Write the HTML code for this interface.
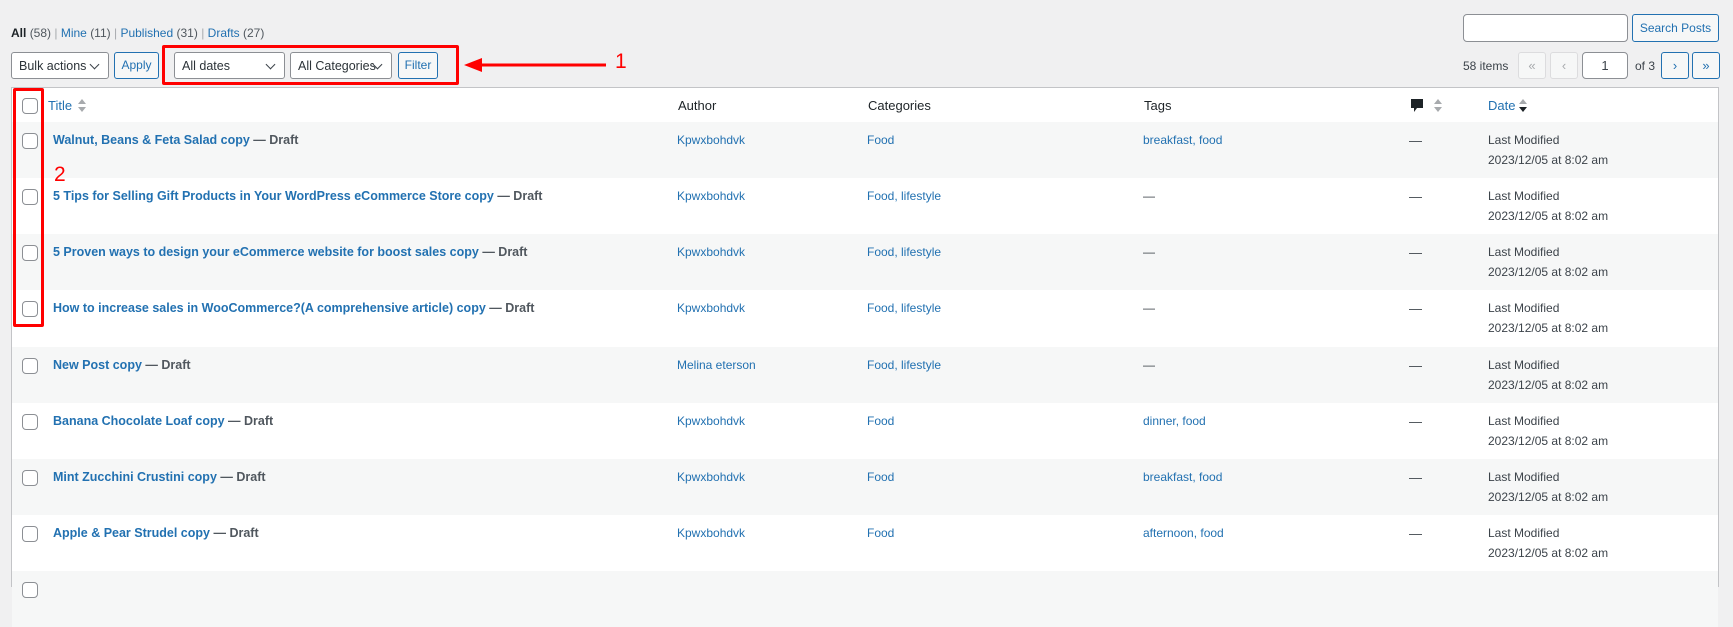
<!DOCTYPE html>
<html><head><meta charset="utf-8"><style>
*{box-sizing:border-box;margin:0;padding:0}
body{width:1733px;height:583px;background:#f0f0f1;font-family:"Liberation Sans",sans-serif;font-size:13px;color:#3c434a;position:relative;overflow:hidden}
.a{position:absolute;white-space:nowrap}
a,.l{color:#2271b1;text-decoration:none}
.sel{position:absolute;background:#fff;border:1px solid #8c8f94;border-radius:3px;height:27px;font-size:12.5px;color:#2c3338;padding:6px 7px;white-space:nowrap;overflow:hidden}
.sel:after{content:"";position:absolute;right:10px;top:8px;width:6px;height:6px;border-right:1.5px solid #3c434a;border-bottom:1.5px solid #3c434a;transform:rotate(45deg);background:#fff}
.btn{position:absolute;border:1px solid #2271b1;color:#2271b1;background:#f6f7f7;border-radius:3px;height:27px;font-size:12px;text-align:center;line-height:25px;white-space:nowrap}
.pb{position:absolute;height:27px;width:28px;border-radius:3px;text-align:center;line-height:25px;font-size:13px;top:52px}
.dis{border:1px solid #dcdcde;color:#a7aaad;background:#f6f7f7}
.en{border:1px solid #2271b1;color:#2271b1;background:#f6f7f7}
.tbl{position:absolute;left:11px;top:87px;width:1708px;height:500px;background:#fff;border:1px solid #c3c4c7}
.hd{position:absolute;left:0;top:0;width:100%;height:35px;border-bottom:1px solid #c3c4c7;font-size:13px}
.row{position:absolute;left:0;width:100%;height:56px}
.cb{position:absolute;width:16px;height:16px;border:1px solid #8c8f94;border-radius:4px;background:#fff}
.t{font-weight:bold;color:#2271b1;font-size:12.5px}
.t span{color:#50575e}
</style></head><body>
<div class="a" style="left:11px;top:26px;font-size:12px"><b style="color:#1d2327;font-weight:600">All</b> <span style="color:#50575e">(58)</span> <span style="color:#a7aaad">|</span> <a>Mine <span style="color:#50575e">(11)</span></a> <span style="color:#a7aaad">|</span> <a>Published <span style="color:#50575e">(31)</span></a> <span style="color:#a7aaad">|</span> <a>Drafts <span style="color:#50575e">(27)</span></a></div>

<div class="sel" style="left:11px;top:52px;width:98px">Bulk actions</div>
<div class="btn" style="left:114px;top:52px;width:45px">Apply</div>
<div class="sel" style="left:174px;top:52px;width:111px">All dates</div>
<div class="sel" style="left:290px;top:52px;width:102px">All Categories</div>
<div class="btn" style="left:398px;top:52px;width:40px">Filter</div>
<div class="a" style="left:162px;top:45px;width:297px;height:40px;border:3px solid #f00;border-radius:2px"></div>
<svg class="a" style="left:462px;top:55px" width="150" height="20"><line x1="14" y1="10" x2="144" y2="10" stroke="#f00" stroke-width="3"/><polygon points="2,10 20,3 20,17" fill="#f00"/></svg>
<div class="a" style="left:615px;top:50px;color:#f00;font-size:21px">1</div>

<div class="a" style="left:1463px;top:14px;width:165px;height:28px;background:#fff;border:1px solid #8c8f94;border-radius:4px"></div>
<div class="btn" style="left:1632px;top:14px;width:87px;height:28px;line-height:26px">Search Posts</div>
<div class="a" style="left:1463px;top:59px;font-size:12px">58 items</div>
<div class="pb dis" style="left:1518px">«</div>
<div class="pb dis" style="left:1550px">‹</div>
<div class="a" style="left:1582px;top:52px;width:46px;height:27px;background:#fff;border:1px solid #8c8f94;border-radius:4px;text-align:center;line-height:25px">1</div>
<div class="a" style="left:1635px;top:59px;font-size:12px">of 3</div>
<div class="pb en" style="left:1661px">›</div>
<div class="pb en" style="left:1692px">»</div>

<div class="tbl">
<div class="hd">
<div class="cb" style="left:10px;top:10px"></div>
<div class="a l" style="left:36px;top:10px">Title</div>
<svg class="a" style="left:66px;top:11px" width="8" height="13"><path d="M0 5L4 0 8 5zM0 8L4 13 8 8z" fill="#a7aaad"/></svg>
<div class="a" style="left:666px;top:10px;color:#1d2327">Author</div>
<div class="a" style="left:856px;top:10px;color:#1d2327">Categories</div>
<div class="a" style="left:1132px;top:10px;color:#1d2327">Tags</div>
<svg class="a" style="left:1398px;top:10px" width="14" height="16"><path d="M1 1h12v9H7l-3 4v-4H1z" fill="#1d2327"/></svg>
<svg class="a" style="left:1422px;top:11px" width="8" height="13"><path d="M0 5L4 0 8 5zM0 8L4 13 8 8z" fill="#a7aaad"/></svg>
<div class="a l" style="left:1476px;top:10px">Date</div>
<svg class="a" style="left:1507px;top:11px" width="8" height="13"><path d="M0 5L4 0 8 5z" fill="#a7aaad"/><path d="M0 8L4 13 8 8z" fill="#1d2327"/></svg>
</div>
</div>

<div id="rows"></div>
<script>
var d=[["Walnut, Beans &amp; Feta Salad copy","Kpwxbohdvk","Food","breakfast, food"],
["5 Tips for Selling Gift Products in Your WordPress eCommerce Store copy","Kpwxbohdvk","Food, lifestyle","—"],
["5 Proven ways to design your eCommerce website for boost sales copy","Kpwxbohdvk","Food, lifestyle","—"],
["How to increase sales in WooCommerce?(A comprehensive article) copy","Kpwxbohdvk","Food, lifestyle","—"],
["New Post copy","Melina eterson","Food, lifestyle","—"],
["Banana Chocolate Loaf copy","Kpwxbohdvk","Food","dinner, food"],
["Mint Zucchini Crustini copy","Kpwxbohdvk","Food","breakfast, food"],
["Apple &amp; Pear Strudel copy","Kpwxbohdvk","Food","afternoon, food"],
["","","",""]];
var h="";
d.forEach(function(r,i){
var top=122+i*56.14;
h+='<div class="row" style="position:absolute;left:12px;width:1706px;top:'+top+'px;background:'+(i%2?'#fff':'#f6f7f7')+'">';
h+='<div class="cb" style="left:10px;top:11px"></div>';
if(r[0]){
h+='<div class="a t" style="left:41px;top:11px">'+r[0]+' <span>— Draft</span></div>';
h+='<div class="a l" style="left:665px;top:11px;font-size:12px">'+r[1]+'</div>';
h+='<div class="a l" style="left:855px;top:11px;font-size:12px">'+r[2]+'</div>';
h+='<div class="a '+(r[3]=="—"?'':'l')+'" style="left:1131px;top:11px;font-size:12px">'+r[3]+'</div>';
h+='<div class="a" style="left:1397px;top:11px">—</div>';
h+='<div class="a" style="left:1476px;line-height:20px;top:8px;font-size:12px">Last Modified<br>2023/12/05 at 8:02 am</div>';}
h+='</div>';});
document.getElementById("rows").outerHTML=h;
</script>
<div class="a" style="left:13px;top:88px;width:31px;height:239px;border:3px solid #f00;border-radius:2px"></div>
<div class="a" style="left:54px;top:163px;color:#f00;font-size:21px">2</div>
</body></html>
